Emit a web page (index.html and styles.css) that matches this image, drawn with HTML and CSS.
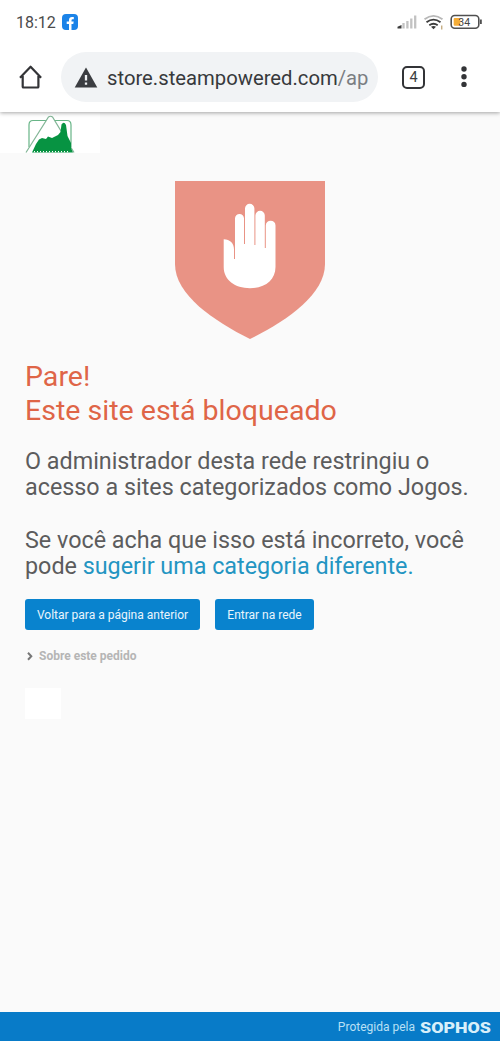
FILE: index.html
```html
<!DOCTYPE html>
<html lang="pt-BR">
<head>
<meta charset="utf-8">
<title>Site bloqueado</title>
<link rel="stylesheet" href="styles.css">
</head>
<body>
<div class="screen">
  <header class="chrome">
    <div class="status">
      <span class="clock">18:12</span>
      <svg class="fb" width="16" height="16" viewBox="0 0 16 16"><rect width="16" height="16" rx="4" fill="#1b83e8"/><path d="M7 16V10H4.700V7.500H7V6Q7 3 10 3H11.800V5.300H10.500Q9.500 5.300 9.500 6.400V7.500H11.700L11.300 10H9.500V16Z" fill="#fff"/></svg>
      <svg class="signals" width="90" height="20" viewBox="395 12 90 20">
        <path d="M397.500 28.500V26.800L401.500 25V28.500Z" fill="#3c3c3c"/>
        <path d="M403.500 28.500V23M407.400 28.500V21M411.300 28.500V18.500M415.200 28.500V15.500" stroke="#c2c2c2" stroke-width="2.300" fill="none"/>
        <g fill="none" stroke-width="1.800"><path d="M424.500 19.200Q433.500 12.500 442.500 19.200" stroke="#b8b8b8"/><path d="M426.500 22.200Q433.500 17 440.500 22.200M429.300 25.200Q433.500 22.300 437.700 25.200" stroke="#3c3c3c"/></g>
        <path d="M431 26.700Q433.500 25.300 436 26.700L433.500 29.200Z" fill="#3c3c3c"/>
        <path d="M441.800 25.500V29.500" stroke="#b08c50" stroke-width="1"/>
        <rect x="451.200" y="15.500" width="27.600" height="12.700" rx="3.500" fill="#fff" stroke="#505050" stroke-width="1.600"/>
        <rect x="453.700" y="18" width="6.600" height="7.800" rx="1" fill="#f5ad36"/>
        <path d="M480.900 19.500V24" stroke="#505050" stroke-width="1.800"/>
        <text class="battery" x="458.300" y="25.700">34</text>
      </svg>
    </div>
    <div class="toolbar">
      <svg class="home" width="24" height="24" viewBox="0.600 0.500 24 24" fill="none" stroke="#333437" stroke-width="2.200" stroke-linejoin="round"><path d="M4.300 11.500V22.200Q4.300 23 5.100 23H19.200Q20 23 20 22.200V11.500M1.600 13.200 12.200 2.200 22.700 13.200"/></svg>
      <div class="address">
        <svg width="24" height="21" viewBox="0 0 24 21"><path d="M12 .5 23.300 20.500H.7Z" fill="#3b3d41"/><path d="M12 8V13.500M12 15.500V17.700" stroke="#f1f3f5" stroke-width="2.300"/></svg>
        <span class="url">store.steampowered.com<span class="path">/ap</span></span>
      </div>
      <span class="tabs">4</span>
      <svg class="menu" width="8" height="22" viewBox="0 0 8 22" fill="#333437"><circle cx="4" cy="3" r="2.700"/><circle cx="4" cy="10.700" r="2.700"/><circle cx="4" cy="18.400" r="2.700"/></svg>
    </div>
  </header>
  <main class="page">
    <div class="brand">
      <svg width="100" height="41" viewBox="0 112 100 41">
        <path d="M29 147V125Q29 120.500 33 120.500H67Q71 120.500 71 125V147" fill="none" stroke="#68b587" stroke-width="1.200"/>
        <path d="M26 152.500 48.500 117Q50.500 115.500 52.500 117L74 152.500" fill="#fff" stroke="#83b697" stroke-width="1.200"/>
        <path d="M32 152.500 36 144 39 139.500 42 138 46 139 48 136.500 52 138 55 136.500 58 135 60.500 132 61.500 124.500Q64 121 66 125L67.500 136 71 143V148L73 152.500Z" fill="#079342"/>
        <path d="M34 151.700H70" stroke="#fff" stroke-width="1.300" stroke-dasharray="1 2"/>
      </svg>
    </div>
    <svg class="shield" width="150" height="158" viewBox="175 181 150 158">
      <path d="M175 181H325V264C325 295 286 321 250 339C214 321 175 295 175 264Z" fill="#e99385"/>
      <path d="M223.700 239.200C230 239.500 234 243 234 249.500V259H235V218.500A4.500 4.500 0 0 1 244 218.500V244H245V208.500A4.700 4.700 0 0 1 254.400 208.500V245H255.400V215.500A4.700 4.700 0 0 1 264.800 215.500V248H265.800V225.500A4.800 4.800 0 0 1 275.500 225.500V267C275.500 280 265 288.200 250 288.200C235 288.200 223.700 280 223.700 267Z" fill="#fff"/>
    </svg>
    <h1 class="title">Pare!<br>Este site está bloqueado</h1>
    <p class="copy">O administrador desta rede restringiu o<br>acesso a sites categorizados como Jogos.</p>
    <p class="copy">Se você acha que isso está incorreto, você<br>pode <a class="link">sugerir uma categoria diferente.</a></p>
    <div class="actions">
      <button class="btn back">Voltar para a página anterior</button>
      <button class="btn enter">Entrar na rede</button>
    </div>
    <div class="about">
      <svg width="6" height="9" viewBox="0 0 6 9"><path d="M1 .8 4.300 4.300 1 7.800" fill="none" stroke="#777" stroke-width="2"/></svg>
      <span>Sobre este pedido</span>
    </div>
    <div class="blank"></div>
  </main>
  <footer class="footer">
    <span>Protegida pela</span>
    <svg width="74" height="24" viewBox="0 0 74 24"><text class="sophos" x="1" y="18" textLength="71" lengthAdjust="spacingAndGlyphs">SOPHOS</text></svg>
  </footer>
</div>
</body>
</html>
```
FILE: styles.css
```css
* { box-sizing: border-box; }
body { margin: 0; font-family: Roboto, "Liberation Sans", sans-serif; background: #fafafa; }
.screen { width: 500px; height: 1041px; display: flex; flex-direction: column; overflow: hidden; }
.chrome { height: 112px; background: #fff; box-shadow: 0 1px 4px rgba(0,0,0,.35); z-index: 1; flex: none; }
.status { height: 44px; display: flex; align-items: center; padding: 0 15px 0 16px; }
.clock { font-size: 16px; color: #4b4b4b; width: 46px; white-space: nowrap; }
.signals { margin-left: auto; }
.battery { font-size: 10.500px; fill: #444; }
.toolbar { height: 66px; display: flex; align-items: center; padding: 0 32px 0 19px; }
.address { height: 50px; width: 317px; margin-left: 18px; padding-left: 13px; border-radius: 25px; background: #f1f3f5; display: flex; align-items: center; gap: 9px; }
.url { font-size: 20.250px; color: #37393c; white-space: nowrap; padding-top: 1px; }
.path { color: #7b7e82; }
.tabs { width: 23px; height: 23px; border: 2px solid #333437; border-radius: 5px; margin-left: 24px; display: flex; align-items: center; justify-content: center; font-size: 14.500px; color: #3b3d40; }
.menu { margin-left: auto; }
.page { flex: 1; display: flex; flex-direction: column; align-items: flex-start; }
.brand { width: 100px; height: 41px; background: #fff; }
.brand svg, .shield { display: block; }
.shield { align-self: center; margin-top: 28px; }
.title { margin: 21px 0 0 25px; font-size: 28.550px; line-height: 33.500px; font-weight: 400; color: #df6547; white-space: nowrap; }
.copy { margin: 21px 0 0 25px; font-size: 23.340px; line-height: 26.300px; color: #5c5c5d; white-space: nowrap; }
.copy + .copy { margin-top: 26px; }
.link { color: #2395c2; }
.actions { display: flex; gap: 15px; margin: 20px 0 0 25px; }
.btn { height: 31px; border: 0; border-radius: 3px; padding: 0; background: #0983ce; color: #e9f5fc; font: 12px Roboto, sans-serif; white-space: nowrap; }
.back { width: 175px; }
.enter { width: 99px; }
.about { display: flex; align-items: center; gap: 6px; height: 16px; margin: 18px 0 0 27px; font-size: 12px; font-weight: 700; color: #b5b5b5; }
.blank { width: 36px; height: 31px; background: #fff; margin: 24px 0 0 25px; }
.footer { height: 29px; flex: none; display: flex; align-items: center; justify-content: flex-end; gap: 4px; padding: 1px 7px 0 0; background: #087bc8; color: #b9e0f5; font-size: 12px; }
.sophos { font: 900 15.500px Roboto, sans-serif; fill: #d8effa; }
```
